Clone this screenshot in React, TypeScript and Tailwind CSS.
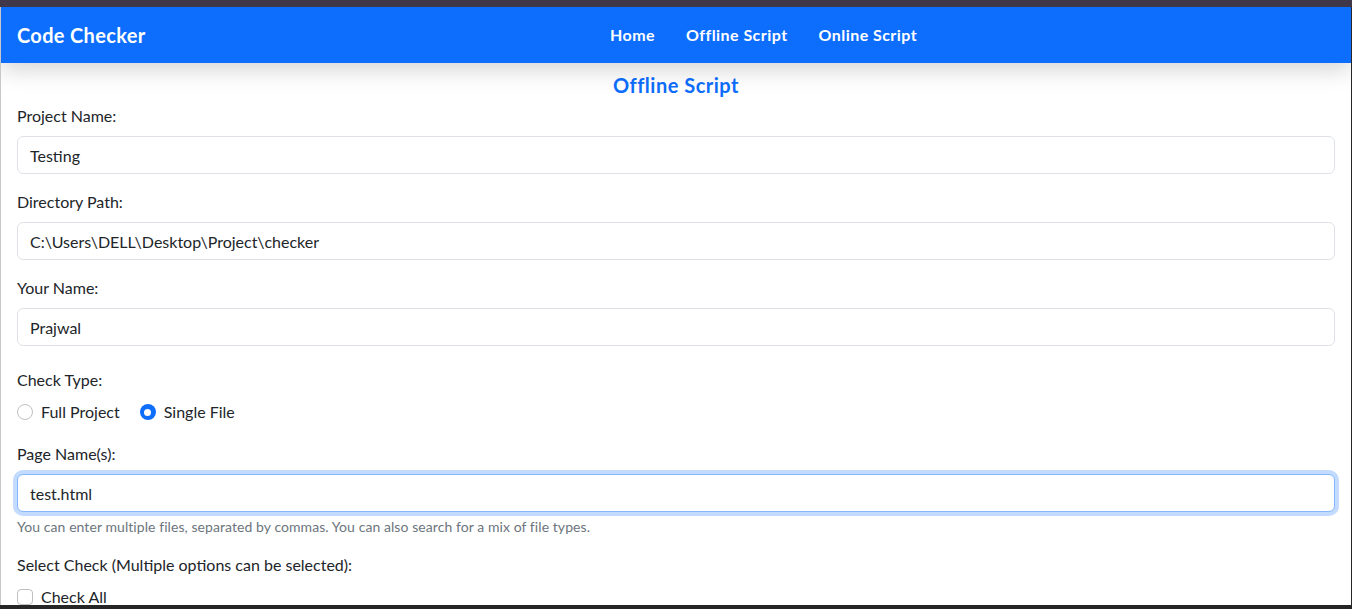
import React from "react"

function Field({ label, value, focused }: { label: string; value: string; focused?: boolean }) {
  return (
    <div>
      <label className="block text-[16px] leading-6 mb-2 text-[#212529]">{label}</label>
      <input
        readOnly
        value={value}
        className={
          focused
            ? "block w-full h-[38px] px-3 text-[16px] text-[#212529] bg-white rounded-[6px] border border-[#86b7fe] shadow-[0_0_0_4px_rgba(13,110,253,0.25)] outline-none"
            : "block w-full h-[38px] px-3 text-[16px] text-[#212529] bg-white rounded-[6px] border border-[#dee2e6] outline-none"
        }
      />
    </div>
  )
}

export default function App() {
  return (
    <div className="h-[609px] overflow-hidden flex flex-col bg-[#262626] font-['Lato','Noto_Sans',sans-serif]">
      {/* window chrome top */}
      <div className="h-[7px] bg-[#403848] shrink-0" />

      <div className="flex-1 flex min-h-0">
        <div className="w-px bg-[#c8c8c8]" />
        <div className="flex-1 bg-white overflow-hidden">
          {/* Navbar */}
          <nav className="relative z-10 h-[56px] bg-[#0d6efd] px-4 flex items-center shadow-[0_6px_24px_rgba(0,0,0,0.18)]">
            <div className="w-[593px] text-white font-bold text-[20px] tracking-[0.33px]">Code Checker</div>
            <div className="flex gap-[31px] text-white font-bold text-[16px] tracking-[0.45px]">
              <span>Home</span>
              <span>Offline Script</span>
              <span>Online Script</span>
            </div>
          </nav>

          <div className="px-4">
            <h2 className="pt-[7px] pb-[4px] text-center text-[20px] leading-[30px] font-bold tracking-[0.5px] text-[#0d6efd]">
              Offline Script
            </h2>

            <div className="mb-4">
              <Field label="Project Name:" value="Testing" />
            </div>
            <div className="mb-4">
              <Field label="Directory Path:" value="C:\Users\DELL\Desktop\Project\checker" />
            </div>
            <div className="mb-[22px]">
              <Field label="Your Name:" value="Prajwal" />
            </div>

            {/* Check type */}
            <div className="mb-[18px]">
              <div className="text-[16px] leading-6 mb-2 text-[#212529]">Check Type:</div>
              <div className="flex items-center gap-5 text-[16px] leading-6 text-[#212529]">
                <div className="flex items-center gap-2">
                  <span className="w-4 h-4 rounded-full border border-[#bfbfbf] bg-white" />
                  <span>Full Project</span>
                </div>
                <div className="flex items-center gap-2">
                  <span className="w-4 h-4 rounded-full bg-[#0d6efd] flex items-center justify-center">
                    <span className="w-[7px] h-[7px] rounded-full bg-white" />
                  </span>
                  <span>Single File</span>
                </div>
              </div>
            </div>

            <Field label="Page Name(s):" value="test.html" focused />
            <p className="mt-1 mb-4 text-[14px] leading-[21px] tracking-[0.07px] text-[#6c757d]">
              You can enter multiple files, separated by commas. You can also search for a mix of file types.
            </p>

            <div className="text-[16px] leading-6 mb-2 text-[#212529]">
              Select Check (Multiple options can be selected):
            </div>
            <div className="flex items-center gap-2 text-[16px] leading-6 text-[#212529]">
              <span className="w-4 h-4 rounded-[4px] border border-[#bfbfbf] bg-white" />
              <span>Check All</span>
            </div>
          </div>
        </div>
        <div className="w-px bg-[#262626]" />
      </div>

      {/* window chrome bottom */}
      <div className="h-[4px] bg-[#262626] shrink-0" />
    </div>
  )
}
